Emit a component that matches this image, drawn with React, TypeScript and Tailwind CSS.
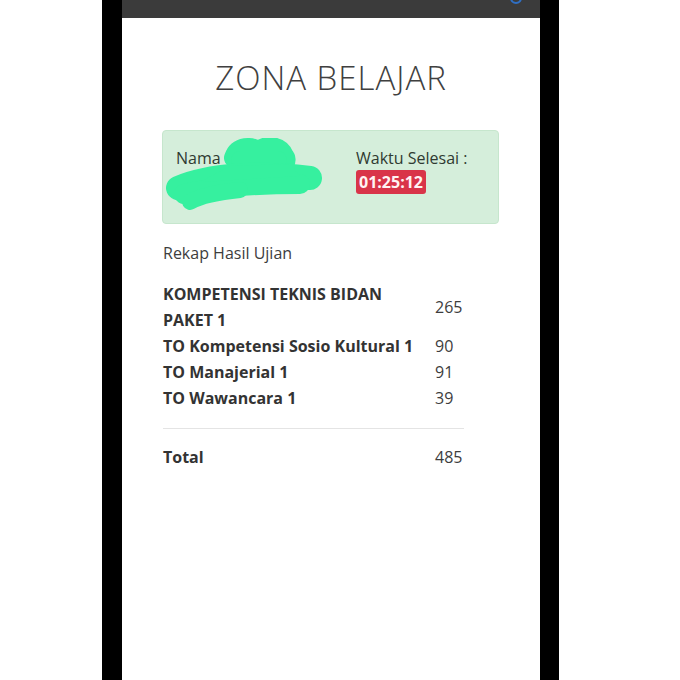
const rows = [
  { label: ["KOMPETENSI TEKNIS BIDAN", "PAKET 1"], value: "265" },
  { label: ["TO Kompetensi Sosio Kultural 1"], value: "90" },
  { label: ["TO Manajerial 1"], value: "91" },
  { label: ["TO Wawancara 1"], value: "39" },
];

// green marker blot over the name
const Scribble = () => (
  <svg
    className="absolute left-[-16px] top-[-10px] pointer-events-none"
    width="170"
    height="75"
    viewBox="0 0 170 75"
  >
    <g fill="none" stroke="#36f09f" strokeLinecap="round" strokeLinejoin="round">
      <path d="M74 20 C78 8 92 8 98 14 C106 6 120 8 124 18 C128 22 124 30 116 30" strokeWidth="20" />
      <path d="M80 22 L118 22" strokeWidth="18" />
      <path d="M18 50 C50 36 100 34 150 40" strokeWidth="24" />
      <path d="M24 56 C50 50 90 46 140 46" strokeWidth="20" />
      <path d="M30 64 C40 58 60 54 80 52" strokeWidth="16" />
    </g>
    <path d="M70 28 L130 26 L140 38 L40 44 Z" fill="#36f09f" />
  </svg>
);

export default function App() {
  return (
    <div className="flex h-[680px] w-[680px] bg-white overflow-hidden" style={{ fontFamily: '"Open Sans", sans-serif' }}>
      <div className="w-[102px] shrink-0 bg-white" />
      <div className="w-[20px] shrink-0 bg-black" />
      <div className="w-[418px] shrink-0 bg-white flex flex-col">
        <div className="h-[18px] bg-[#3b3b3b] relative overflow-hidden">
          <div className="absolute right-[18px] top-[-8px] w-[12px] h-[12px] rounded-full border-2 border-[#2f6fc4]" />
        </div>
        <div className="px-[40px] pt-[41px]">
          <h1 className="text-center text-[33px] font-light text-[#404040] leading-[38px] tracking-[1px]">
            ZONA BELAJAR
          </h1>
          <div className="mt-[33px] w-[337px] h-[94px] rounded-[4px] bg-[#d5eedb] border border-[#c6e6cd] flex pt-[17px] pl-[13px]">
            <div className="relative w-[180px] text-[16px] text-[#2f3a31] leading-[20px]">
              Nama
              <Scribble />
            </div>
            <div className="text-[16px] text-[#2f3a31] leading-[20px]">
              <div>Waktu Selesai :</div>
              <span className="inline-block mt-[2px] bg-[#d93449] text-[#fff3f3] font-bold text-[16px] leading-[24px] px-[3px] rounded-[3px]">
                01:25:12
              </span>
            </div>
          </div>
          <div className="mt-[18px] pl-px text-[16px] text-[#3d3d3d] leading-[22px]">Rekap Hasil Ujian</div>
          <div className="mt-[17px] w-[302px] pl-px text-[16px] text-[#333] leading-[26px]">
            {rows.map((r) => (
              <div key={r.value} className="flex items-center">
                <div className="flex-1 font-bold">
                  {r.label.map((l) => (
                    <div key={l}>{l}</div>
                  ))}
                </div>
                <div className="w-[29px] text-[#3d3d3d]">{r.value}</div>
              </div>
            ))}
            <div className="mt-[17px] border-t border-[#e4e4e4]" />
            <div className="flex items-center mt-[15px]">
              <div className="flex-1 font-bold">Total</div>
              <div className="w-[29px] text-[#3d3d3d]">485</div>
            </div>
          </div>
        </div>
      </div>
      <div className="w-[19px] shrink-0 bg-black" />
      <div className="flex-1 bg-white" />
    </div>
  );
}
